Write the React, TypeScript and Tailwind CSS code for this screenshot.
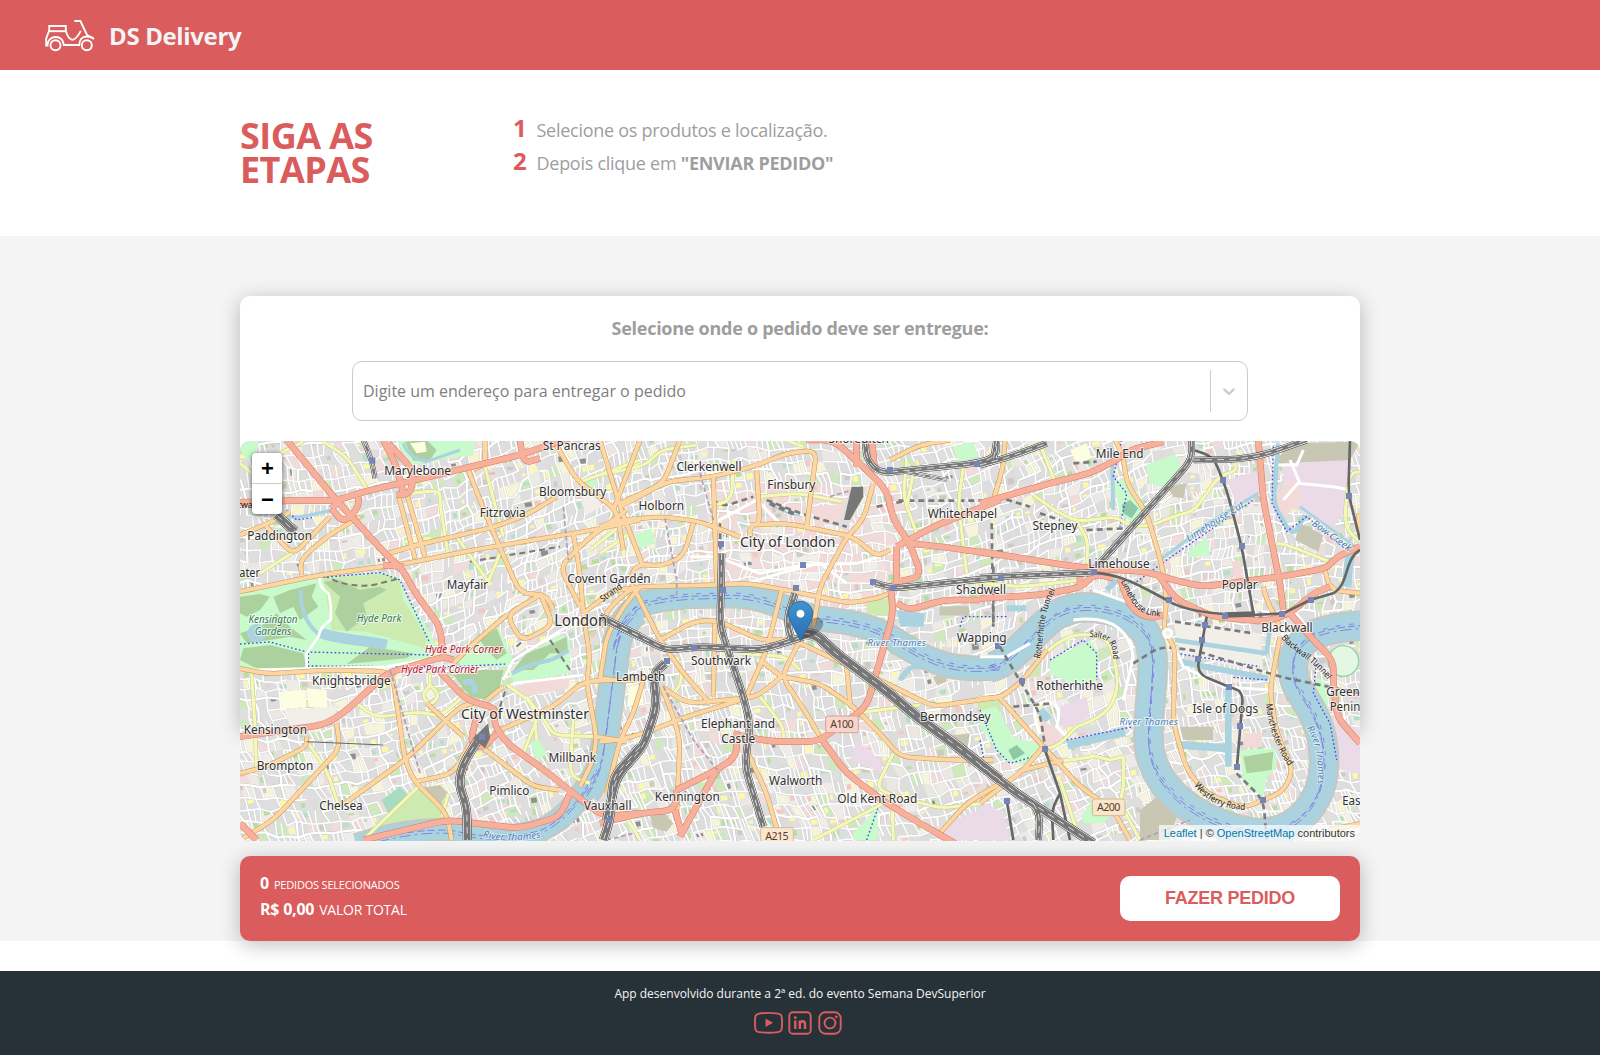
import React from 'react';

type Pt = [number, number];
type Road = { s: number; d: string; w?: number };

/* The map is drawn at three units per pixel, on three sheets that sit side by side. */
const SHEET = [0, 1080, 2220];
const LAND_W = 3360;
const LAND_H = 1205;

const rand = (() => {
  let seed = 20471;
  return () => {
    seed = (seed * 16807) % 2147483647;
    return seed / 2147483647;
  };
})();

/* Turns the corners of a straight-line path into short curves. */
function soften(d: string): string {
  if (/[CQHVZ]/.test(d)) return d;
  return d
    .split('M')
    .filter(Boolean)
    .map((part) => {
      const pts = part.split('L').map((p) => p.trim().split(/[ ,]+/).map(Number) as Pt);
      let out = `M${pts[0][0]} ${pts[0][1]}`;
      for (let i = 1; i < pts.length - 1; i++) {
        const [a, b, c] = [pts[i - 1], pts[i], pts[i + 1]];
        const la = Math.hypot(a[0] - b[0], a[1] - b[1]) || 1;
        const lc = Math.hypot(c[0] - b[0], c[1] - b[1]) || 1;
        const ka = Math.min(34, la / 2) / la;
        const kc = Math.min(34, lc / 2) / lc;
        out += `L${(b[0] + (a[0] - b[0]) * ka).toFixed(1)} ${(b[1] + (a[1] - b[1]) * ka).toFixed(1)}`;
        out += `Q${b[0]} ${b[1]} ${(b[0] + (c[0] - b[0]) * kc).toFixed(1)} ${(b[1] + (c[1] - b[1]) * kc).toFixed(1)}`;
      }
      const e = pts[pts.length - 1];
      return `${out}L${e[0]} ${e[1]}`;
    })
    .join('');
}

const blockColours = [
  '#dedede', '#dedede', '#dedede', '#dedede', '#dedede', '#dddddd', '#dfdfdf', '#dedede', '#dedede', '#dcdcdc', '#e0dfde',
  '#f0ede8', '#eeeae6', '#ebe7e3', '#f0dcda', '#cfe8bd', '#f6f5dc',
];
const centreColours = ['#f2dad9', '#f2dad9', '#f2efe9', '#e4dfdd', '#f2dad9', '#efe3df', '#efdcdb'];

function buildStreets() {
  const step = 32;
  const cols = 128;
  const rows = 66;
  const nodes: Pt[][] = [];
  for (let r = 0; r < rows; r++) {
    const row: Pt[] = [];
    for (let c = 0; c < cols; c++) {
      const u = c * step - 300;
      const v = r * step - 400;
      const a = -0.2;
      let x = u * Math.cos(a) - v * Math.sin(a);
      let y = u * Math.sin(a) + v * Math.cos(a) + 420;
      x += Math.sin(y / 210 + 1) * 46 + Math.sin(u / 330) * 28;
      y += Math.sin(x / 260) * 62 + Math.cos(v / 170) * 20;
      row.push([Math.round(x + (rand() - 0.5) * 15), Math.round(y + (rand() - 0.5) * 15)]);
    }
    nodes.push(row);
  }
  const cells: { d: string; f: string }[] = [];
  const lots: { d: string; f: string }[] = [];
  let thin = '';
  let wide = '';
  const inside = (p: Pt) => p[0] > -50 && p[0] < LAND_W + 50 && p[1] > -50 && p[1] < LAND_H + 50;
  for (let r = 0; r < rows - 1; r++) {
    for (let c = 0; c < cols - 1; c++) {
      const p = nodes[r][c];
      const q = nodes[r][c + 1];
      const s = nodes[r + 1][c + 1];
      const t = nodes[r + 1][c];
      if (!inside(p)) continue;
      const centre = p[0] > 1380 && p[0] < 1960 && p[1] > 120 && p[1] < 500;
      const set = centre ? centreColours : blockColours;
      const f = set[Math.floor(rand() * set.length)];
      cells.push({ d: `M${p}L${q}L${s}L${t}Z`, f });
      if (rand() < 0.34) {
        const w = 7 + rand() * 15;
        const h = 6 + rand() * 13;
        const x = Math.round(p[0] + 4 + rand() * 8);
        const y = Math.round(p[1] + 2 + rand() * 8);
        const k = rand();
        const lf = k < 0.3 ? '#fcf9a8' : k < 0.5 ? '#d0cac5' : k < 0.66 ? '#b4e0c6' : k < 0.84 ? '#b9dfa0' : k < 0.95 ? '#f3c9c6' : '#8f8f8f';
        lots.push({ d: `M${x} ${y}l${w.toFixed(0)} -3l3 ${h.toFixed(0)}l-${w.toFixed(0)} 3Z`, f: lf });
      }
      if (rand() < 0.78) {
        if (r % 4 === 0) wide += `M${p}L${q}`;
        else thin += `M${p}L${q}`;
      }
      if (rand() < 0.72) {
        if (c % 5 === 0) wide += `M${p}L${t}`;
        else thin += `M${p}L${t}`;
      }
      if (rand() < 0.36) {
        const mx = (p[0] + q[0]) / 2;
        const my = (p[1] + q[1]) / 2;
        thin += `M${mx} ${my}L${(s[0] + t[0]) / 2} ${(s[1] + t[1]) / 2}`;
      }
    }
  }
  return { cells, lots, thin, wide };
}
const streets = buildStreets();

const areas: { s: number; d: string; f: string }[] = [
  { s: 0, f: '#c8facc', d: 'M0 462L240 412L430 398L478 412L500 470L560 560L590 620L580 650L440 680L200 690L0 690Z' },
  { s: 0, f: '#cdebb0', d: 'M250 415L430 402L475 415L490 480L560 590L555 625L380 575L275 570Z' },
  { s: 0, f: '#add19e', d: 'M0 470L60 462L90 470L60 510L20 530L0 520ZM100 470L150 450L230 430L215 470L235 500L180 540L160 500L120 520ZM60 560L110 520L150 560L200 600L150 590L90 600L20 610L0 580Z' },
  { s: 0, f: '#add19e', d: 'M250 425L300 420L360 450L420 440L440 450L370 490L380 530L320 575L285 520L300 470Z' },
  { s: 0, f: '#add19e', d: 'M10 625L90 615L190 640L200 685L60 690L0 660Z' },
  { s: 0, f: '#add19e', d: 'M390 620L520 640L500 655L320 672Z' },
  { s: 0, f: '#c8facc', d: 'M650 655L740 570L775 560L820 660L800 680L660 678Z' },
  { s: 0, f: '#add19e', d: 'M720 600L770 565L800 640L770 660L740 630Z' },
  { s: 0, f: '#add19e', d: 'M640 705L720 690L790 690L780 740L740 780L690 770Z' },
  { s: 0, f: '#c8facc', d: 'M810 710L840 660L960 585L990 600L988 700L830 728Z' },
  { s: 0, f: '#add19e', d: 'M820 690L860 640L940 610L980 590L985 640L930 640L880 690Z' },
  { s: 0, f: '#c8facc', d: 'M0 0L55 0L50 45L20 60L0 30Z' },
  { s: 0, f: '#c8facc', d: 'M470 0L705 0L700 45L590 60L520 75L490 40Z' },
  { s: 0, f: '#add19e', d: 'M495 5L560 0L590 30L570 60L520 62Z' },
  { s: 0, f: '#fdfde0', d: 'M510 10L555 5L560 35L530 40Z' },
  { s: 0, f: '#c8facc', d: 'M1030 130L1055 110L1075 130L1050 150Z' },
  { s: 0, f: '#a8dcc0', d: 'M425 1080L480 1040L520 1085L450 1135Z' },
  { s: 0, f: '#cdebb0', d: 'M400 1180L530 1040L620 1125L600 1150L450 1185Z' },
  { s: 0, f: '#c7c7b4', d: 'M540 1045L600 1035L625 1060L600 1090Z' },
  { s: 0, f: '#c8facc', d: 'M870 910L895 895L920 940L890 965Z' },
  { s: 0, f: '#fdfde0', d: 'M120 755L195 750L200 800L125 808Z' },
  { s: 0, f: '#fdfde0', d: 'M200 745L260 750L262 805L205 800Z' },
  { s: 0, f: '#f2efe9', d: 'M1020 175L1065 160L1085 200L1040 225Z' },
  { s: 0, f: '#f2dad9', d: 'M820 740L900 720L990 715L985 745L860 770Z' },
  { s: 0, f: '#f2efe9', d: 'M130 810L290 800L285 845L150 855Z' },
  { s: 1, f: '#c8facc', d: 'M105 285L155 265L165 310L120 325Z' },
  { s: 1, f: '#c8facc', d: 'M1060 20L1120 5L1135 50L1075 65Z' },
  { s: 1, f: '#f2dad9', d: 'M640 200L740 190L740 260L650 250Z' },
  { s: 1, f: '#dedede', d: 'M750 150L790 145L790 170L740 270L715 265Z' },
  { s: 1, f: '#cdebb0', d: 'M800 480L880 475L870 530L800 520Z' },
  { s: 1, f: '#aad3df', d: 'M890 510L975 520L970 560L900 560Z' },
  { s: 1, f: '#c7c7b4', d: 'M1020 500L1105 498L1110 528L1018 526Z' },
  { s: 1, f: '#c7c7b4', d: 'M1000 710L1040 695L1040 725L1010 735Z' },
  { s: 1, f: '#c7c7b4', d: 'M1020 890L1110 880L1100 930L1060 920Z' },
  { s: 1, f: '#ebdbe8', d: 'M1010 1160L1140 1110L1200 1150L1200 1200L1020 1200Z' },
  { s: 1, f: '#ebdbe8', d: 'M770 900L840 960L850 1000L750 960Z' },
  { s: 1, f: '#c7c7b4', d: 'M150 1130L190 1115L220 1150L200 1175L160 1165Z' },
  { s: 1, f: '#c8facc', d: 'M760 1180L835 1100L832 1200L760 1200Z' },
  { s: 1, f: '#cdebb0', d: 'M1130 790L1200 770L1200 930L1160 880Z' },
  { s: 1, f: '#fdfde0', d: 'M90 740L130 735L130 790L80 800Z' },
  { s: 2, f: '#c8facc', d: 'M498 75L585 42L608 98L575 150L510 130Z' },
  { s: 2, f: '#c8facc', d: 'M400 130L440 110L500 205L460 250L420 220Z' },
  { s: 2, f: '#8dc8a8', d: 'M425 195L450 180L475 205L455 235L430 220Z' },
  { s: 2, f: '#fdfde0', d: 'M270 30L320 10L335 55L290 70Z' },
  { s: 2, f: '#c7c7b4', d: 'M560 140L620 130L610 175L580 170Z' },
  { s: 2, f: '#ebdbe8', d: 'M740 120L838 90L840 160L770 195Z' },
  { s: 2, f: '#ebdbe8', d: 'M900 60L1110 60L1110 200L1060 260L930 200Z' },
  { s: 2, f: '#c7c7b4', d: 'M920 10L1140 5L1110 60L910 70L880 90Z' },
  { s: 2, f: '#f2dad9', d: 'M880 170L945 110L970 180L900 240Z' },
  { s: 2, f: '#c7c7b4', d: 'M960 250L1030 285L1015 335L945 300Z' },
  { s: 2, f: '#f2dad9', d: 'M755 365L780 360L795 430L765 430Z' },
  { s: 2, f: '#c8facc', d: 'M620 340L680 290L690 345L625 350Z' },
  { s: 2, f: '#c8facc', d: 'M210 660L330 600L355 640L350 720L300 740L210 700Z' },
  { s: 2, f: '#c8facc', d: 'M0 810L50 800L100 890L190 920L130 975L70 960L0 860Z' },
  { s: 2, f: '#8dc8a8', d: 'M85 930L110 915L135 940L100 960Z' },
  { s: 2, f: '#ebdbe8', d: 'M240 800L320 770L330 830L250 870Z' },
  { s: 2, f: '#f2dad9', d: 'M180 840L240 870L240 910L190 920Z' },
  { s: 2, f: '#c7c7b4', d: 'M600 860L700 860L700 900L610 900Z' },
  { s: 2, f: '#c8facc', d: 'M780 930L885 925L890 985L860 1010L850 1070L790 1030Z' },
  { s: 2, f: '#add19e', d: 'M790 950L880 935L875 990L800 1000Z' },
  { s: 2, f: '#f2dad9', d: 'M790 880L845 878L848 920L790 925Z' },
  { s: 2, f: '#c7c7b4', d: 'M480 1110L545 1060L590 1130L570 1200L480 1200Z' },
  { s: 2, f: '#c8facc', d: 'M305 1130L335 1080L400 1120L370 1150L310 1150Z' },
  { s: 2, f: '#ebdbe8', d: 'M0 1080L70 1120L90 1200L0 1200Z' },
  { s: 2, f: '#ebdbe8', d: 'M1040 820L1140 870L1140 1000L1080 990Z' },
  { s: 2, f: '#c8facc', d: 'M1005 710L1040 730L1045 810L1010 790Z' },
  { s: 2, f: '#f2efe9', d: 'M580 545L840 580L850 700L600 640Z' },
];

const water: Road[] = [
  { s: 0, w: 58, d: 'M350 1215C460 1180 560 1165 640 1172C760 1200 830 1190 900 1172C990 1130 1030 1060 1070 990' },
  { s: 0, w: 70, d: 'M1040 1060C1090 990 1090 930 1102 850L1128 640C1136 580 1150 550 1190 515' },
  { s: 1, w: 64, d: 'M40 620C60 560 70 520 130 490C230 465 300 468 400 466C500 470 560 510 650 535C760 545 830 560 900 610C980 660 1060 700 1200 680' },
  { s: 2, w: 78, d: 'M30 682C100 670 170 560 230 525C290 490 370 500 430 525C500 560 520 600 518 680C515 800 490 900 520 970C560 1080 690 1160 830 1180C960 1180 1020 1080 1030 1000C1040 900 1010 830 970 770C920 700 930 630 990 590C1040 565 1090 560 1160 556' },
  { s: 0, w: 12, d: 'M182 450C180 520 210 570 250 590' },
  { s: 0, w: 32, d: 'M240 578C300 600 380 600 440 615' },
  { s: 0, w: 12, d: 'M815 700L880 670L940 660L985 630' },
  { s: 0, w: 18, d: 'M670 730Q705 710 705 760' },
  { s: 0, w: 10, d: 'M140 230L180 232L270 212' },
  { s: 0, w: 9, d: 'M490 10Q505 55 560 65L660 30' },
  { s: 1, w: 6, d: 'M505 190L560 220L600 225' },
  { s: 2, w: 12, d: 'M395 20L400 210' },
  { s: 2, w: 10, d: 'M540 360L700 240L835 160' },
  { s: 2, w: 14, d: 'M895 10L880 190L925 270L945 280L975 225' },
  { s: 2, w: 8, d: 'M960 200L1140 330' },
  { s: 2, w: 28, d: 'M1110 330L1100 440' },
  { s: 2, w: 18, d: 'M600 665L700 685L865 715' },
  { s: 2, w: 20, d: 'M745 740L745 980' },
  { s: 2, w: 24, d: 'M600 915L745 925' },
  { s: 2, w: 26, d: 'M262 915L435 875' },
  { s: 2, w: 26, d: 'M180 810L205 840' },
  { s: 2, w: 14, d: 'M585 600L860 640M870 560L860 640' },
  { s: 2, w: 18, d: 'M380 450L410 420M80 505L140 505' },
  { s: 1, w: 16, d: 'M900 720L930 680L960 680' },
];

const secondary: Road[] = [
  { s: 0, d: 'M0 70L60 120L130 130M120 40L190 5M250 5L320 50L380 145M515 160L600 150L600 190L625 350M735 80L790 290' },
  { s: 0, d: 'M650 290L745 425M780 340L745 425M60 400L170 330M35 700L45 860L50 1000M350 790L405 832L545 815L600 830L680 760M570 700L570 740M205 910L260 990L300 1110M380 1190L540 1035' },
  { s: 0, d: 'M570 735L600 765L570 800L545 765L570 735M1035 470L1030 500M860 770L920 850L940 885L1060 890M890 840L850 940M1000 830L990 1010L1050 1030M800 735L880 790L890 900M625 1060L605 1130M1050 330L1150 250M1010 130L1200 60' },
  { s: 1, d: 'M0 105L140 75L180 30L290 15M400 60L395 180L330 200M470 170L600 160L725 185M950 60L960 90M920 60L910 170L950 280M1090 80L1075 190L1100 400M560 0L610 20M940 100L920 200M0 340L90 280' },
  { s: 1, d: 'M480 770L550 860L550 900M215 770L250 720L230 650M880 940L830 1040L860 1060L1020 1105L1150 1090M760 820L960 795M640 1200L850 1090M875 1060L880 1200M420 640L560 650L600 690M120 1200L60 1100' },
  { s: 2, d: 'M175 0L225 125M160 165L230 215L290 245L410 230L440 255L505 260L590 225L640 215L720 105L770 95L765 50M290 245L325 300L320 370M0 430L130 440L300 420M890 310L920 315L1050 365M1140 305L1100 270L1095 210L1110 100L1140 95' },
  { s: 2, d: 'M130 720C200 620 260 575 330 585C400 590 400 640 410 700C420 790 380 830 290 860C260 890 240 920 200 925M330 945L390 960L430 950L430 1040L420 1090L480 1200M200 970L340 950M240 1020L300 1200' },
];

const primary: Road[] = [
  { s: 0, d: 'M0 455L240 405L500 370L700 330L880 300L1060 270L1200 240M0 285L120 235L150 215M75 255L160 345L270 230M185 405L180 360L260 290L360 230' },
  { s: 0, d: 'M430 345L530 315L760 262L860 225L950 170M500 160L555 350M475 165L525 355M685 90L720 180L770 300L840 460L920 465L940 510M700 90L735 70M735 0L735 70' },
  { s: 0, d: 'M940 0L1010 120L1130 210L1150 330M1200 0L1120 210M1020 500L960 380L1040 300L1160 210M1000 280L1020 400L1030 520M900 465L800 525L845 605L940 555L900 460M800 525L690 620L640 670' },
  { s: 0, d: 'M0 685L80 702L260 690L440 695L460 720L495 960L520 1020L620 1120L635 1200M290 850L300 925L100 1140L0 1200M200 890L200 920L80 980L0 1000M300 1100L495 960L660 800L700 790' },
  { s: 0, d: 'M670 890L560 790M740 780L790 740M780 870L940 800L1030 725L1120 720M1030 525L1050 650L1040 730L1070 890L1060 960L1020 1040M1070 890L1160 905M530 1025L640 1000L690 910M730 925L880 1040L960 1050M1030 520L1120 450L1180 445' },
  { s: 0, d: 'M1080 720L1100 590L1150 500L1200 440' },
  { s: 1, d: 'M0 0L60 200L130 380M240 0L190 130L60 190M60 200L200 125L340 110L460 80L560 40L650 30L620 260M0 260L60 240L190 230L300 245L420 290M450 255L560 250L760 290L830 350L870 330M470 90L480 250L450 260L450 290' },
  { s: 1, d: 'M340 110L350 430M90 420L110 370L180 380L250 350L280 250M0 560L30 500L100 440L350 435L440 430L560 450L750 490L850 470L880 450M95 430L180 600L250 700L330 790M820 130L790 240L740 290L660 440L640 560M545 450L500 630L470 700L430 790' },
  { s: 1, d: 'M0 715L90 725L140 710M180 600L280 545L350 540L480 600L580 600L880 740L1000 800L1200 770M600 600L545 710L620 820L660 890M545 710L660 730L760 800L840 880L900 950L1050 960L1180 960M545 710L480 660' },
  { s: 1, d: 'M0 905L60 900L130 880L260 830L470 765M185 740L220 830L240 900L230 1120M345 550L340 770M185 740L260 790L380 780L470 770L545 710M130 720L100 820L60 900L20 1060M740 680L750 790M440 930L500 1060L540 1200M1010 1190L1100 1090L1200 1030M870 60L960 15L1050 0' },
  { s: 2, d: 'M75 0L70 80L40 180M405 0L430 50L440 130L500 220L545 370L560 480L550 570L585 620L580 850L620 990L680 1060L790 1105L910 1055L940 990L890 880L870 750L900 590' },
  { s: 2, d: 'M0 775L60 775L130 720L200 630M60 775L190 920L300 1040L400 1110L450 1200M190 920L130 990L0 1090M250 960L130 990M340 380L340 420M850 440L860 480L900 560M1035 390L1050 450L1140 460' },
  { s: 2, d: 'M1135 220L1140 280M1050 1170L1140 1150' },
];

const trunk: Road[] = [
  { s: 0, d: 'M140 0L280 170L440 345L490 390L520 450L600 560L610 650' },
  { s: 0, d: 'M0 187L130 182L290 182L370 155L560 112L735 70L840 45L1000 -10M430 0L470 80L490 160M445 10L520 90L515 160L470 165M840 0L850 70L900 55' },
  { s: 0, d: 'M275 205L310 250L355 205L355 170M275 205L300 180M430 375L490 380' },
  { s: 0, d: 'M0 890L250 855L310 820L440 700L610 650L640 660M600 695L680 780L770 805L760 850L800 910L900 980L1000 1060L1090 1130L1200 1120' },
  { s: 0, d: 'M710 830L690 910L730 925L770 880M370 1200L620 1140L840 1165L960 1130L990 1060M0 1150L50 1200' },
  { s: 1, d: 'M620 0L700 0L790 80L860 150L880 240L930 310L965 410L870 430L880 520L800 800L690 880L650 905L520 905L430 890L400 880M770 0L770 80M815 0L825 90' },
  { s: 1, d: 'M890 320L1000 260L1100 220L1200 180M930 310L1060 325L1200 345M890 490L930 510L1030 480L1140 480M890 320L890 430' },
  { s: 1, d: 'M410 880L410 950L350 990L230 1050M350 990L240 1190M230 1050L225 1110L120 1120L0 1150M225 1110L245 1180M660 890L740 1000L860 1090L960 1150L1100 1230' },
  { s: 2, d: 'M0 190L210 130L330 100L410 60L450 30L550 5M0 335L220 370L330 385L500 395L580 420L670 440L780 425L900 410L1040 385L1070 350L1140 320M0 475L180 465L310 440L340 400L400 415' },
  { s: 2, d: 'M835 0L850 180L880 330L900 430L910 510M530 400L590 480L700 530L860 545L930 520L1000 460L1050 440M420 415L450 500L500 535L550 525M1060 720L1070 830L1140 910M300 390L300 440' },
  { s: 2, d: 'M930 520L1000 600L1060 660L1060 720' },
];

const rails: Road[] = [
  { s: 0, w: 8, d: 'M370 0L395 60L405 115' },
  { s: 0, w: 22, d: 'M110 225L165 275' },
  { s: 0, w: 20, d: 'M720 890L670 970L655 1030L680 1100L682 1200M1200 920L1120 1010L1110 1140L1090 1200' },
  { s: 0, w: 16, d: 'M1080 530L1200 590' },
  { s: 1, w: 15, d: 'M0 530L200 630L300 620L480 630L550 610L610 590M365 340L360 560L430 770L450 850L435 980L490 1160M585 460L560 540L575 600' },
  { s: 1, w: 20, d: 'M195 670L160 700L170 800L130 920L50 1010L20 1140' },
  { s: 1, w: 26, d: 'M610 580L650 585L700 635L850 745L950 830L1060 910L1200 1020' },
  { s: 1, w: 13, d: 'M795 0L800 60L840 100L930 90L1130 70L1190 50L1190 0M820 428L880 445L1200 412' },
  { s: 1, w: 6, d: 'M920 95L1040 120' },
  { s: 2, w: 13, d: 'M0 75L90 50L200 10M50 0L40 60M635 0L635 60L350 380M0 412L340 398M640 60L770 58L850 45L980 0' },
  { s: 2, w: 20, d: 'M0 975L110 1060L340 1210' },
  { s: 2, w: 14, d: 'M160 1090L180 1130L175 1200' },
];

const lightRail: Road[] = [
  { s: 2, w: 8, d: 'M340 398C440 405 500 450 560 480C620 520 740 525 820 525L910 520L990 480L1060 460C1110 430 1090 360 1140 330' },
  { s: 2, w: 8, d: 'M640 30L700 50L740 150L785 320L820 520M1110 0L1105 160L1140 300' },
  { s: 2, w: 8, d: 'M680 530L650 700L745 740L790 755L770 990M195 930L240 1060M80 1080L100 1200M240 1060L215 1110L220 1200M240 1060L270 1200' },
  { s: 2, w: 16, d: 'M735 525L825 522' },
  { s: 0, w: 3, d: 'M200 905L430 915' },
];

const tunnels: Road[] = [
  { s: 1, w: 8, d: 'M340 180L370 200L460 170M500 180L600 220L740 260M895 182L1200 182M830 200L930 180M1175 250L1180 560M360 250L362 400' },
  { s: 0, w: 6, d: 'M250 405L300 430L380 440L480 415M690 365L960 320M830 620L870 580M930 600L990 690M780 800L800 740' },
  { s: 2, w: 8, d: 'M40 380L40 560M60 620L100 690L180 820L195 920M100 800L220 790M460 670L540 620L640 630L900 710L1140 760M585 545L820 580M770 1000L850 1080L860 1200M320 270L440 265M50 170L150 200M180 220L240 240M280 70L350 65' },
  { s: 1, w: 12, d: 'M510 190L590 225' },
];

const stations: [number, number, number][] = [
  [0, 397, 62], [0, 726, 890], [1, 363, 312], [1, 609, 375], [1, 588, 444], [1, 369, 450], [1, 282, 624], [1, 201, 663],
  [1, 819, 426], [1, 878, 444], [1, 870, 90], [1, 1131, 72], [1, 27, 1140], [1, 1194, 618], [2, 63, 414], [2, 342, 396],
  [2, 567, 480], [2, 735, 528], [2, 675, 555], [2, 666, 600], [2, 654, 657], [2, 747, 741], [2, 780, 858], [2, 771, 981],
  [2, 849, 1080], [2, 906, 522], [2, 993, 480], [2, 786, 318], [2, 729, 120], [2, 1107, 168], [2, 126, 723], [2, 195, 927], [2, 81, 1083],
];

type Label = [number, string, number, number, number, number?];
const places: Label[] = [
  [0, 'St Pancras', 995, 29, 174], [0, 'Marylebone', 533, 103, 200], [0, 'Bloomsbury', 998, 165, 202],
  [0, 'Fitzrovia', 788, 229, 138], [0, 'Paddington', 119, 299, 194], [0, 'ater', 29, 409, 62],
  [0, 'Mayfair', 682, 446, 124], [0, 'Covent Garden', 1107, 427, 250], [0, 'Knightsbridge', 334, 733, 236],
  [0, 'Kensington', 106, 881, 190], [0, 'Brompton', 135, 987, 170], [0, 'Chelsea', 303, 1107, 130],
  [0, 'Pimlico', 808, 1064, 120], [0, 'Millbank', 997, 963, 143], [0, 'Vauxhall', 1103, 1107, 143],
  [0, 'London', 1022, 555, 158, 46], [0, 'City of Westminster', 855, 834, 384, 42],
  [1, 'Clerkenwell', 327, 91, 195], [1, 'Finsbury', 574, 145, 145], [1, 'Holborn', 184, 207, 137],
  [1, 'City of London', 563, 319, 286, 42], [1, 'Southwark', 363, 674, 180], [1, 'Lambeth', 122, 720, 148],
  [1, 'Elephant and', 414, 861, 222], [1, 'Castle', 415, 908, 102], [1, 'Walworth', 587, 1033, 160],
  [1, 'Kennington', 262, 1081, 195], [1, 'Old Kent Road', 832, 1086, 240], [1, 'Bermondsey', 1066, 841, 212],
  [1, 'Whitechapel', 1087, 233, 208], [1, 'Shadwell', 1143, 459, 150], [1, 'Wapping', 1145, 605, 150],
  [1, 'Shoreditch', 776, 8, 182], [2, 'Mile End', 419, 53, 143], [2, 'Stepney', 225, 269, 135],
  [2, 'Limehouse', 417, 382, 184], [2, 'Poplar', 779, 446, 108], [2, 'Blackwall', 921, 573, 154],
  [2, 'Rotherhithe', 269, 748, 200], [2, 'Isle of Dogs', 736, 818, 197], [2, 'Green', 1089, 765, 100],
  [2, 'Penin', 1095, 811, 92], [2, 'Eas', 1114, 1094, 55],
];

const curved: { id: string; s: number; t: string; d: string; f: string; size: number; len: number; it?: boolean }[] = [
  { id: 'strand', s: 0, t: 'Strand', d: 'M1088 487L1150 442', f: '#222', size: 27, len: 74 },
  { id: 'rtunnel', s: 2, t: 'Rotherhithe Tunnel', d: 'M180 657C195 600 180 540 226 450', f: '#222', size: 27, len: 213 },
  { id: 'salter', s: 2, t: 'Salter Road', d: 'M328 590C390 595 400 610 399 668', f: '#222', size: 27, len: 114 },
  { id: 'link', s: 2, t: 'Limehouse Link', d: 'M422 424C455 490 470 530 548 530', f: '#222', size: 27, len: 170 },
  { id: 'btunnel', s: 2, t: 'Blackwall Tunnel', d: 'M903 592C925 630 1000 660 1044 721', f: '#222', size: 27, len: 190 },
  { id: 'manch', s: 2, t: 'Manchester Road', d: 'M858 792C865 860 890 930 927 980', f: '#222', size: 27, len: 200 },
  { id: 'west', s: 2, t: 'Westferry Road', d: 'M642 1036C680 1085 730 1108 800 1110', f: '#222', size: 27, len: 176 },
  { id: 'cut', s: 2, t: 'Limehouse Cut', d: 'M626 306L797 197', f: '#4d80b3', size: 29, len: 200, it: true },
  { id: 'bow', s: 2, t: 'Bow Creek', d: 'M994 254L1108 337', f: '#4d80b3', size: 29, len: 138, it: true },
  { id: 'thames3', s: 2, t: 'River Thames', d: 'M980 864C1010 910 1015 960 1014 1035', f: '#4d80b3', size: 29, len: 174, it: true },
  { id: 'thames4', s: 0, t: 'River Thames', d: 'M728 1190Q800 1212 907 1192', f: '#4d80b3', size: 29, len: 176, it: true },
];

const Paths = ({ list, w, c, dash, extra = 0, own }: { list: Road[]; w?: number; c: string; dash?: string; extra?: number; own?: boolean }) => (
  <g fill="none" stroke={c} strokeLinejoin="round" strokeDasharray={dash}>
    {list.map((r, i) => (
      <path key={i} d={soften(r.d)} transform={`translate(${SHEET[r.s]} 0)`} strokeWidth={(own ? r.w ?? w ?? 1 : w ?? r.w ?? 1) + extra} />
    ))}
  </g>
);

const Tag = ({ s, x, y, t, f, b }: { s: number; x: number; y: number; t: string; f: string; b: string }) => (
  <g transform={`translate(${SHEET[s] + x} ${y})`}>
    <rect width="98" height="50" rx="6" fill={f} stroke={b} strokeWidth="3" />
    <text x="49" y="37" fontSize="32" textAnchor="middle" textLength="70" fill="#5c3a22">{t}</text>
  </g>
);

const LondonMap = () => (
  <svg className="block h-full w-full" viewBox="0 3 3360 1200" preserveAspectRatio="none" fontFamily='"Noto Sans", "Open Sans", sans-serif'>
    <rect width={LAND_W} height={LAND_H} fill="#dedede" />
    {streets.cells.map((c, i) => <path key={i} d={c.d} fill={c.f} />)}
    {streets.lots.map((c, i) => <path key={i} d={c.d} fill={c.f} />)}
    <path d={streets.thin} stroke="#cbcbcb" strokeWidth="6.5" fill="none" />
    <path d={streets.wide} stroke="#bfbfbf" strokeWidth="9" fill="none" />
    <path d={streets.thin} stroke="#fff" strokeWidth="4.8" fill="none" />
    <path d={streets.wide} stroke="#fff" strokeWidth="7" fill="none" />
    {areas.map((a, i) => <path key={i} d={a.d} fill={a.f} transform={`translate(${SHEET[a.s]} 0)`} />)}
    <circle cx="50" cy="580" r="28" fill="#aad3df" />
    <circle cx="3310" cy="663" r="46" fill="#e3f7e3" stroke="#8fd3a8" strokeWidth="4" />
    <Paths list={water.slice(0, 4)} c="#c2c8c4" own extra={14} />
    <Paths list={water} c="#aad3df" own />
    <Paths list={water.slice(0, 4)} c="#7d85e8" w={3} dash="22 9" />
    <g transform="translate(0 9)"><Paths list={water.slice(0, 4)} c="#7f8ad8" w={3} dash="34 12 8 12" /></g>
    <g transform="translate(4 -7)"><Paths list={water.slice(2, 4)} c="#7d85e8" w={3} dash="14 26" /></g>
    <g fill="none" stroke="#3d49e6" strokeWidth="4" strokeDasharray="5 7">
      <path d="M250 412L420 398L480 420L570 610M0 612L90 606L200 636L570 645M205 640L205 678L650 680L800 672M140 210L170 240L220 232" />
      <path d="M2645 0L2620 110L2660 160L2640 260M3100 20L3096 190L3140 275L3200 230L3320 330M2690 425L2780 360L3040 180M2220 810L2270 930L2310 970L2380 950" />
      <path d="M2430 660L2530 600L2570 640L2570 720M2240 1000L2220 900M2480 900L2680 860M3230 660L3220 760L3270 850L3290 960M2810 640L3060 680M2980 712L3080 720M2160 560L2170 530L2300 530M1880 1200L1915 1100" />
    </g>
    <path d="M240 412Q235 440 265 460Q275 490 272 540Q240 560 235 590L200 640V690M10 690L440 680L610 650M820 660L1020 535M820 730L1030 705M820 660L790 720" fill="none" stroke="#fff" strokeWidth="8" />
    <path d="M1350 350L1430 350L1560 400L1690 375L1850 370L1920 350M1420 250L1550 180L1620 250M1520 430L1620 400L1740 370L1820 430M3115 75L3170 75L3190 30M3175 130L3280 140L3330 150M3150 60L3178 125L3130 180M2220 650L2300 650L2370 610M2400 880Q2360 790 2420 785Q2470 790 2450 860L2480 890M2500 540Q2660 520 2680 650L2650 780M2780 570L2830 680L2950 740L3090 750M3160 510L3200 560M2560 450L2700 500" fill="none" stroke="#fff" strokeWidth="9" />
    <Paths list={tunnels} c="#7a7a7a" own dash="18 12" />
    <Paths list={secondary} c="#c3c878" w={12} />
    <Paths list={secondary} c="#f4f8bb" w={9.5} />
    <Paths list={primary} c="#c99a4c" w={15} />
    <Paths list={primary} c="#fcd6a4" w={12} />
    <Paths list={trunk} c="#d97a60" w={20} />
    <Paths list={trunk} c="#f7b09c" w={17} />
    <g fill="none" stroke="#b59ab8" strokeWidth="5" strokeDasharray="14 8">
      <path d="M970 200L985 360M1100 1200L1180 1180M1275 235L1310 420V470M1380 100L1420 240M1270 740L1360 900L1440 1000M1770 170L1870 140M450 690L540 1000M2700 1200L2850 1140" />
    </g>
    <Paths list={lightRail} c="#666" own />
    <Paths list={rails} c="#333" own extra={7} />
    <Paths list={rails} c="#fff" own extra={4} />
    <Paths list={rails} c="#777" own />
    <Paths list={rails} c="#dedede" w={3} dash="20 16" />
    <path d="M1835 140L1870 140V170L1830 240H1812Z" fill="#777" />
    <path d="M700 895L735 925L750 895L745 850Z" fill="#777" />
    <circle cx="2783" cy="580" r="12" fill="#f2efe9" stroke="#fff" strokeWidth="9" />
    {stations.map(([s, x, y], i) => <rect key={i} x={SHEET[s] + x - 9} y={y - 9} width="18" height="18" fill="#7685b5" />)}
    <Tag s={1} x={677} y={828} t="A100" f="#f8d5cc" b="#d9a08e" />
    <Tag s={1} x={482} y={1163} t="A215" f="#f9e6cf" b="#d8b98c" />
    <Tag s={2} x={337} y={1077} t="A200" f="#f9e6cf" b="#d8b98c" />
    <g stroke="#fff" strokeOpacity="0.7" strokeWidth="6.5" strokeLinejoin="round" paintOrder="stroke" textAnchor="middle">
      {places.map(([s, t, x, y, len, size]) => (
        <text key={t} x={SHEET[s] + x} y={y + 2} fontSize={size ?? 38} textLength={len} lengthAdjust="spacingAndGlyphs" fill="#303030">{t}</text>
      ))}
      <g fontStyle="italic" fontSize="32">
        <text x="99" y="550" textLength="147" lengthAdjust="spacingAndGlyphs" fill="#2f7d4f">Kensington</text>
        <text x="99" y="586" textLength="110" lengthAdjust="spacingAndGlyphs" fill="#2f7d4f">Gardens</text>
        <text x="417" y="545" textLength="134" lengthAdjust="spacingAndGlyphs" fill="#2f7d4f">Hyde Park</text>
        <text x="672" y="638" textLength="234" lengthAdjust="spacingAndGlyphs" fill="#b5122e">Hyde Park Corner</text>
        <text x="600" y="699" textLength="234" lengthAdjust="spacingAndGlyphs" fill="#b5122e">Hyde Park Corner</text>
        <text x="1970" y="618" fontSize="29" textLength="175" fill="#4d80b3">River Thames</text>
        <text x="2726" y="855" fontSize="29" textLength="175" fill="#4d80b3">River Thames</text>
      </g>
      <text x="16" y="205" fontSize="26" fill="#222" stroke="none">twa</text>
    </g>
    {curved.map((c) => (
      <g key={c.id} transform={`translate(${SHEET[c.s]} 0)`}>
        <path id={c.id} d={c.d} fill="none" />
        <text fontSize={c.size} fill={c.f} fontStyle={c.it ? 'italic' : undefined} stroke="#fff" strokeOpacity={c.it ? 0.6 : 0.25} strokeWidth="5" paintOrder="stroke">
          <textPath href={`#${c.id}`} textLength={c.len} lengthAdjust="spacingAndGlyphs">{c.t}</textPath>
        </text>
      </g>
    ))}
  </svg>
);

const Marker = () => (
  <svg className="absolute left-[547px] top-[160px] h-[41px] w-[41px] overflow-visible" viewBox="0 0 41 41">
    <defs>
      <linearGradient id="pin" x1="0" y1="0" x2="0" y2="1">
        <stop offset="0" stopColor="#3f94d0" />
        <stop offset="1" stopColor="#2a6db3" />
      </linearGradient>
    </defs>
    <path d="M13 40L20 22Q31 12 36 20Q38 28 26 34Z" fill="#000" opacity="0.28" />
    <path d="M13.500 .5C6.500 .5 1.300 6 1.300 12.600c0 3.600 1.600 6.800 3.200 9.800L13.500 39.500l9-17.100c1.600-3 3.200-6.200 3.200-9.800C25.700 6 20.500 .5 13.500 .5z" fill="url(#pin)" stroke="#2e6c97" strokeWidth="1" />
    <circle cx="13.500" cy="12.800" r="4.300" fill="#fff" stroke="#2e78ad" strokeWidth=".6" />
  </svg>
);

const Scooter = () => (
  <svg className="mt-[2px] h-[32px] w-[50px]" viewBox="0 0 50 32" fill="none" stroke="#fff" strokeWidth="1.900">
    <rect x="4.200" y="6" width="16.600" height="5.200" />
    <path d="M4 11L1.200 18.500V25.600H2.500C2.500 21 5.500 17 10.500 17C15.500 17 18.300 20.500 18.800 25H34.300C34.300 20 37 16.500 41.500 16.500C45 16.500 47 17.500 49 19" />
    <path d="M20.800 11C22 15 24 19.700 27.500 19.700C31 19.700 33.500 15 35.800 11M29.400 1H35.400L42.500 16M42 15L48.600 18.400" />
    <circle cx="10.500" cy="25.300" r="5" />
    <circle cx="41.800" cy="25.300" r="5" />
  </svg>
);

export default function App() {
  return (
    <div className="flex min-h-[1055px] flex-col bg-white font-['Open_Sans',sans-serif] text-[#9e9e9e]">
      <header className="flex h-[70px] items-center gap-[14px] bg-[#da5c5c] pl-[45px]">
        <Scooter />
        <span className="pt-[2px] text-2xl font-bold tracking-[-0.36px] text-[#f4f4f4]">DS Delivery</span>
      </header>

      <section className="flex h-[166px] justify-center">
        <div className="flex w-[1120px] pt-[49px]">
          <h1 className="w-[273px] text-[36px] leading-[34px] font-bold tracking-[-0.54px] text-[#da5c5c]">SIGA AS<br />ETAPAS</h1>
          <ul className="-mt-[8px] text-lg tracking-[-0.27px]">
            <li className="flex h-[33px] items-baseline"><b className="w-[23.5px] text-2xl leading-[33px] text-[#da5c5c]">1</b>Selecione os produtos e localização.</li>
            <li className="flex h-[33px] items-baseline"><b className="w-[23.5px] text-2xl leading-[33px] text-[#da5c5c]">2</b><span>Depois clique em <b>"ENVIAR PEDIDO"</b></span></li>
          </ul>
        </div>
      </section>

      <main className="flex h-[705px] flex-col items-center bg-[#f4f4f4] pt-[60px]">
        <section className="h-[434px] w-[1120px] shrink-0 rounded-[10px] bg-white shadow-[0_4px_20px_rgba(0,0,0,0.25)]">
          <h2 className="pt-[19px] text-center text-lg leading-[27px] font-bold tracking-[-0.27px]">Selecione onde o pedido deve ser entregue:</h2>
          <div className="mx-auto mt-[19px] flex h-[60px] w-[896px] items-center rounded-[10px] border border-[#cccccc] pl-[10px]">
            <span className="flex-1 text-base text-[#808080]">Digite um endereço para entregar o pedido</span>
            <span className="my-2 w-px self-stretch bg-[#cccccc]" />
            <svg className="mx-2 h-5 w-5 fill-[#cccccc]" viewBox="0 0 20 20">
              <path d="M4.516 7.548c0.436-0.446 1.043-0.481 1.576 0l3.908 3.747 3.908-3.747c0.533-0.481 1.141-0.446 1.574 0 0.436 0.445 0.408 1.197 0 1.615-0.406 0.418-4.695 4.502-4.695 4.502-0.217 0.223-0.502 0.335-0.787 0.335s-0.570-0.112-0.789-0.335c0 0-4.287-4.084-4.695-4.502s-0.436-1.170 0-1.615z" />
            </svg>
          </div>
          <div className="relative mt-5 h-[400px] overflow-hidden rounded-[10px]">
            <LondonMap />
            <Marker />
            <div className="absolute top-3 left-3 w-[30px] rounded bg-white text-center font-['Liberation_Sans',sans-serif] text-[22px] leading-[32px] font-bold text-black shadow-[0_1px_5px_rgba(0,0,0,0.65)]">
              <div className="h-[31px] border-b border-[#cccccc] pl-px">+</div>
              <div className="h-[30px] pl-px">−</div>
            </div>
            <div className="absolute right-0 bottom-0 h-4 bg-white/70 px-[5px] font-['Liberation_Sans',sans-serif] text-[11px] leading-4 text-[#333333]">
              <span className="text-[#0078a8]">Leaflet</span> | © <span className="text-[#0078a8]">OpenStreetMap</span> contributors
            </div>
          </div>
        </section>

        <section className="mt-[126px] flex h-[85px] w-[1120px] shrink-0 items-center justify-between rounded-[10px] bg-[#da5c5c] px-5 text-white shadow-[0_4px_20px_rgba(0,0,0,0.25)]">
          <div className="pb-[6px] tracking-[-0.24px]">
            <div className="flex h-[26px] items-baseline gap-[5px] text-[11px] tracking-[-0.2px]"><b className="text-base leading-[26px]">0</b>PEDIDOS SELECIONADOS</div>
            <div className="flex h-[26px] items-baseline gap-[5px] text-sm"><b className="text-base leading-[26px]">R$ 0,00</b>VALOR TOTAL</div>
          </div>
          <button className="h-[45px] w-[220px] rounded-[10px] bg-white pb-[2px] font-['Liberation_Sans',sans-serif] text-lg font-bold tracking-[-0.27px] text-[#da5c5c]">FAZER PEDIDO</button>
        </section>
      </main>

      <footer className="mt-[30px] flex h-[84px] flex-col items-center bg-[#263238] pt-[14px] text-xs leading-[18px] text-[#f4f4f4]">
        <p>App desenvolvido durante a 2ª ed. do evento Semana DevSuperior</p>
        <div className="mt-[8px] flex h-6 items-center gap-[5px] pr-[5px] text-[#da5c5c]">
          <svg className="h-6 w-[29px]" viewBox="0 0 29 24" fill="none" stroke="currentColor" strokeWidth="1.900">
            <path d="M5 2.600Q14.500 1.200 24 2.600Q27.600 3 27.800 6.500Q28.300 12 27.800 17Q27.500 20.700 24 21.100Q14.500 22.300 5 21.100Q1.500 20.700 1.200 17Q.7 12 1.200 6.500Q1.500 3 5 2.600Z" />
            <path d="M11.500 7.500L19 11.800L11.500 16Z" fill="currentColor" stroke="none" />
          </svg>
          <svg className="h-6 w-6" viewBox="0 0 24 24" fill="none" stroke="currentColor" strokeWidth="1.900">
            <rect x="1.300" y="1.300" width="21.400" height="21.400" rx="3.500" />
            <path d="M7.300 9.500V18M11.800 9.500V18M11.800 13Q12.200 10.300 14.600 10.300Q17 10.300 17 13.300V18" strokeWidth="2.400" />
            <circle cx="7.300" cy="6.700" r="1.400" fill="currentColor" stroke="none" />
          </svg>
          <svg className="ml-[1px] h-6 w-6" viewBox="0 0 24 24" fill="none" stroke="currentColor" strokeWidth="1.900">
            <rect x="1.300" y="1.300" width="21.400" height="21.400" rx="6" />
            <circle cx="12" cy="12" r="5.400" />
            <circle cx="18.300" cy="5.800" r="1.400" fill="currentColor" stroke="none" />
          </svg>
        </div>
      </footer>
    </div>
  );
}
